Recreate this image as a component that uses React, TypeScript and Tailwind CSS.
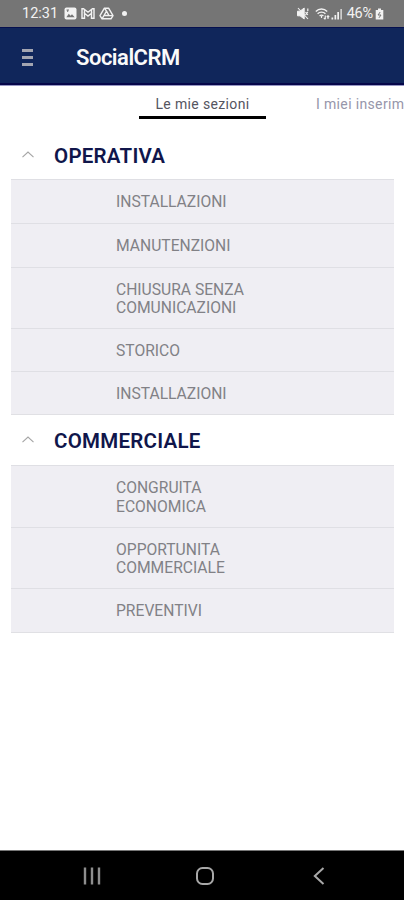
import React from 'react';

interface SectionItem {
  lines: string[];
  height: string;
}

interface SectionProps {
  title: string;
  titleClass: string;
  items: SectionItem[];
}

const operativa: SectionItem[] = [
  { lines: ['INSTALLAZIONI'], height: 'h-[44px]' },
  { lines: ['MANUTENZIONI'], height: 'h-[44px]' },
  { lines: ['CHIUSURA SENZA', 'COMUNICAZIONI'], height: 'h-[61px]' },
  { lines: ['STORICO'], height: 'h-[43px]' },
  { lines: ['INSTALLAZIONI'], height: 'h-[43px]' },
];

const commerciale: SectionItem[] = [
  { lines: ['CONGRUITA', 'ECONOMICA'], height: 'h-[62px]' },
  { lines: ['OPPORTUNITA', 'COMMERCIALE'], height: 'h-[61px]' },
  { lines: ['PREVENTIVI'], height: 'h-[44px]' },
];

const StatusBar: React.FC = () => (
  <div className="flex h-[27px] shrink-0 items-center bg-[#757575] pl-[22px] pr-[20px] text-[#f2f2f2]">
    <span className="w-[42px] whitespace-nowrap text-[14.5px]">12:31</span>
    <svg className="h-[13px] w-[13px]" viewBox="0 0 13 13">
      <rect x="0.5" y="0.5" width="12" height="12" rx="2" fill="currentColor" />
      <path d="M2.3 10.3 L4.8 6.8 L6.5 8.8 L8 7.3 L10.7 10.3 Z" fill="#757575" />
      <path d="M2.5 3 H5 M3.7 3 V5" stroke="#757575" strokeWidth="1" />
    </svg>
    <svg className="ml-[4px] h-[13px] w-[14px]" viewBox="0 0 14 13" fill="none" stroke="currentColor" strokeWidth="1.4">
      <path d="M1 11.3 V1.7 H2.5 L7 5.2 L11.5 1.7 H13 V11.3 H10.5 V6.3 L7 9 L3.5 6.3 V11.3 Z" />
      <path d="M3.5 6.3 V2.5 M10.5 6.3 V2.5" />
    </svg>
    <svg className="ml-[4px] h-[13px] w-[15px]" viewBox="0 0 15 13" fill="none" stroke="currentColor" strokeWidth="1.4" strokeLinejoin="round">
      <path d="M5.4 1.2 H9.6 L14 8.6 L12 11.8 H3 L1 8.6 Z" />
      <path d="M7.5 4.2 L10 8.5 H5 Z M5.4 1.2 L7.5 4.2 M14 8.6 H10 M3 11.8 L5 8.5" />
    </svg>
    <span className="ml-[8px] h-[5px] w-[5px] rounded-full bg-[#f2f2f2]" />
    <svg className="ml-auto h-[13px] w-[12px]" viewBox="0 0 12 13" fill="none" stroke="currentColor">
      <path d="M0.5 4.2 H3 L7.2 1 V12 L3 8.8 H0.5 Z" fill="currentColor" />
      <path d="M1 1 L11 12" strokeWidth="1.1" />
      <path d="M8.5 5 L10.8 8 M10.8 4.8 L8.5 8 M10.8 1.5 V4" strokeWidth="1.2" />
    </svg>
    <svg className="ml-[6px] h-[12px] w-[15px]" viewBox="0 0 15 12" fill="none" stroke="currentColor" strokeWidth="1.4">
      <path d="M0.8 3.4 C4 0.2 9 0.2 12.2 3.4 M2.6 5.8 C4.8 3.6 8.2 3.6 10.4 5.8 M4.6 8 C5.8 6.9 7.2 6.9 8.4 8" />
      <path d="M6.5 8 V10 M10.3 7.5 V11.3 M8.8 9.8 L10.3 11.3 M13 11 V8 M11.8 9 L13 7.8 L14.2 9" strokeWidth="1.1" />
    </svg>
    <svg className="ml-px h-[12px] w-[12px]" viewBox="0 0 12 12" fill="currentColor">
      <path d="M0.5 9.5 H2.2 V11.5 H0.5 Z M3.5 7 H5.2 V11.5 H3.5 Z M6.3 4 H8 V11.5 H6.3 Z" />
      <path d="M9.3 1 H11 V11.5 H9.3 Z" fillOpacity="0.7" />
    </svg>
    <span className="ml-[4px] whitespace-nowrap text-[14.5px] tracking-[-0.2px]">46%</span>
    <svg className="ml-[2px] h-[12px] w-[9px]" viewBox="0 0 9 12">
      <path d="M3 0.5 H6 V2 H8.3 V11.5 H0.7 V2 H3 Z" fill="currentColor" />
      <path d="M5.2 4 L3 7 H6 L4 9.8" fill="none" stroke="#757575" strokeWidth="1" />
    </svg>
  </div>
);

const Header: React.FC = () => (
  <div className="flex h-[59px] shrink-0 items-center border-b border-b-[#9797c4] bg-[#10265b] pl-[22px] pt-[2px] shadow-[inset_0_-2px_0_#050649,inset_0_1px_0_#06104f]">
    <div className="flex w-[11px] flex-col gap-[4px]">
      <span className="h-[3px] bg-[#a3a5b1]" />
      <span className="h-[3px] bg-[#a3a5b1]" />
      <span className="h-[3px] bg-[#a3a5b1]" />
    </div>
    <h1 className="ml-[43px] pt-px text-[22px] font-semibold tracking-[-0.5px] text-[#fafafa]">SocialCRM</h1>
  </div>
);

const Tabs: React.FC = () => (
  <div className="flex h-[46px] shrink-0 whitespace-nowrap pl-[139px] text-[14px]">
    <div className="flex h-[33px] w-[127px] shrink-0 items-center justify-center border-b-[3px] border-black pt-[6px] tracking-[0.35px] text-[#55555f]">
      Le mie sezioni
    </div>
    <div className="ml-[50px] flex h-[33px] shrink-0 items-center pt-[3px] tracking-[0.35px] text-[#9696aa]">
      I miei inserim
    </div>
  </div>
);

const Section: React.FC<SectionProps> = ({ title, titleClass, items }) => (
  <section>
    <div className={`flex items-center pl-[22px] ${titleClass}`}>
      <svg className="mb-[3px] h-[7px] w-[12px]" viewBox="0 0 12 7" fill="none" stroke="#a5a5a5" strokeWidth="1.1">
        <path d="M0.5 6.2 L6 1 L11.5 6.2" />
      </svg>
      <h2 className="ml-[20px] text-[20.5px] font-semibold tracking-[0.25px] text-[#10164b]">{title}</h2>
    </div>
    <ul className="ml-[11px] mr-[10px] border-b border-[#e0e0e4] bg-[#efeef3]">
      {items.map((item, i) => (
        <li
          key={i}
          className={`flex flex-col justify-center border-t border-[#dfdfe4] pl-[105px] pt-[2px] text-[15.65px] leading-[18.3px] text-[#818186] ${item.height}`}
        >
          {item.lines.map((line) => (
            <span key={line}>{line}</span>
          ))}
        </li>
      ))}
    </ul>
  </section>
);

const NavBar: React.FC = () => (
  <div className="mt-auto flex h-[50px] shrink-0 items-center border-t border-[#777777] bg-black pl-[83px]">
    <svg className="h-[18px] w-[18px]" viewBox="0 0 18 18" fill="none" stroke="#8e8e8e" strokeWidth="2.4">
      <path d="M2 0.5 V17.5 M9 0.5 V17.5 M16 0.5 V17.5" />
    </svg>
    <svg className="ml-[95px] h-[18px] w-[18px]" viewBox="0 0 18 18" fill="none" stroke="#a8a8a8" strokeWidth="2">
      <rect x="1" y="1" width="16" height="16" rx="5.5" />
    </svg>
    <svg className="ml-[99px] h-[18px] w-[12px]" viewBox="0 0 12 18" fill="none" stroke="#a8a8a8" strokeWidth="2">
      <path d="M10.5 1 L1.8 9 L10.5 17" />
    </svg>
  </div>
);

const App: React.FC = () => {
  return (
    <div className="flex h-[900px] w-[404px] flex-col overflow-hidden bg-white font-['Roboto',sans-serif]">
      <StatusBar />
      <Header />
      <Tabs />
      <Section title="OPERATIVA" titleClass="h-[47px] pt-px" items={operativa} />
      <Section title="COMMERCIALE" titleClass="h-[50px] pt-[2px]" items={commerciale} />
      <NavBar />
    </div>
  );
};

export default App;
